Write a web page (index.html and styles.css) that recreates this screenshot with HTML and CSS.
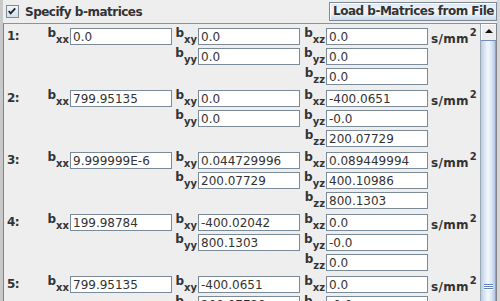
FILE: index.html
```html
<!DOCTYPE html>
<html>
<head>
	<meta charset="UTF-8">
	<title>b-matrices</title>
	<link rel="stylesheet" href="styles.css">
</head>
<body>
	<div class="panel">
		<div class="topbar">
			<label class="chk">
				<span class="box">
					<svg width="13" height="13" viewBox="0 0 13 13">
						<path d="M3 6 L5 8.5 L10 3" fill="none" stroke="#222" stroke-width="2"/>
					</svg>
				</span>
				Specify b-matrices
			</label>
			<button class="load">Load b-Matrices from File</button>
		</div>
		<div class="scrollpane">
			<div class="viewport">
				<!-- 1 -->
				<div class="entry">
					<div class="idx">1:</div>
					<div class="pair xx"><span class="lbl"><b>b</b><sub>xx</sub></span><input value="0.0"></div>
					<div class="pair xy"><span class="lbl"><b>b</b><sub>xy</sub></span><input value="0.0"></div>
					<div class="pair xz"><span class="lbl"><b>b</b><sub>xz</sub></span><input value="0.0"></div>
					<div class="unit">s/mm<sup>2</sup></div>
					<div class="pair yy"><span class="lbl"><b>b</b><sub>yy</sub></span><input value="0.0"></div>
					<div class="pair yz"><span class="lbl"><b>b</b><sub>yz</sub></span><input value="0.0"></div>
					<div class="pair zz"><span class="lbl"><b>b</b><sub>zz</sub></span><input value="0.0"></div>
				</div>
				<!-- 2 -->
				<div class="entry">
					<div class="idx">2:</div>
					<div class="pair xx"><span class="lbl"><b>b</b><sub>xx</sub></span><input value="799.95135"></div>
					<div class="pair xy"><span class="lbl"><b>b</b><sub>xy</sub></span><input value="0.0"></div>
					<div class="pair xz"><span class="lbl"><b>b</b><sub>xz</sub></span><input value="-400.0651"></div>
					<div class="unit">s/mm<sup>2</sup></div>
					<div class="pair yy"><span class="lbl"><b>b</b><sub>yy</sub></span><input value="0.0"></div>
					<div class="pair yz"><span class="lbl"><b>b</b><sub>yz</sub></span><input value="-0.0"></div>
					<div class="pair zz"><span class="lbl"><b>b</b><sub>zz</sub></span><input value="200.07729"></div>
				</div>
				<!-- 3 -->
				<div class="entry">
					<div class="idx">3:</div>
					<div class="pair xx"><span class="lbl"><b>b</b><sub>xx</sub></span><input value="9.999999E-6"></div>
					<div class="pair xy"><span class="lbl"><b>b</b><sub>xy</sub></span><input value="0.044729996"></div>
					<div class="pair xz"><span class="lbl"><b>b</b><sub>xz</sub></span><input value="0.089449994"></div>
					<div class="unit">s/mm<sup>2</sup></div>
					<div class="pair yy"><span class="lbl"><b>b</b><sub>yy</sub></span><input value="200.07729"></div>
					<div class="pair yz"><span class="lbl"><b>b</b><sub>yz</sub></span><input value="400.10986"></div>
					<div class="pair zz"><span class="lbl"><b>b</b><sub>zz</sub></span><input value="800.1303"></div>
				</div>
				<!-- 4 -->
				<div class="entry">
					<div class="idx">4:</div>
					<div class="pair xx"><span class="lbl"><b>b</b><sub>xx</sub></span><input value="199.98784"></div>
					<div class="pair xy"><span class="lbl"><b>b</b><sub>xy</sub></span><input value="-400.02042"></div>
					<div class="pair xz"><span class="lbl"><b>b</b><sub>xz</sub></span><input value="0.0"></div>
					<div class="unit">s/mm<sup>2</sup></div>
					<div class="pair yy"><span class="lbl"><b>b</b><sub>yy</sub></span><input value="800.1303"></div>
					<div class="pair yz"><span class="lbl"><b>b</b><sub>yz</sub></span><input value="-0.0"></div>
					<div class="pair zz"><span class="lbl"><b>b</b><sub>zz</sub></span><input value="0.0"></div>
				</div>
				<!-- 5 -->
				<div class="entry">
					<div class="idx">5:</div>
					<div class="pair xx"><span class="lbl"><b>b</b><sub>xx</sub></span><input value="799.95135"></div>
					<div class="pair xy"><span class="lbl"><b>b</b><sub>xy</sub></span><input value="-400.0651"></div>
					<div class="pair xz"><span class="lbl"><b>b</b><sub>xz</sub></span><input value="0.0"></div>
					<div class="unit">s/mm<sup>2</sup></div>
					<div class="pair yy"><span class="lbl"><b>b</b><sub>yy</sub></span><input value="200.07729"></div>
					<div class="pair yz"><span class="lbl"><b>b</b><sub>yz</sub></span><input value="-0.0"></div>
					<div class="pair zz"><span class="lbl"><b>b</b><sub>zz</sub></span><input value="800.1303"></div>
				</div>
			</div>
			<div class="vscroll">
				<div class="arrow"></div>
				<div class="thumb"><span class="grip"></span></div>
			</div>
		</div>
	</div>
</body>
</html>
```

FILE: styles.css
```css
* {
	margin: 0;
	padding: 0;
	box-sizing: border-box;
}

html,
body {
	width: 500px;
	height: 301px;
	overflow: hidden;
	background: #eeeeee;
	font-family: "DejaVu Sans", sans-serif;
	color: #333;
}

.panel {
	height: 301px;
	display: flex;
	flex-direction: column;
	border-left: 3px solid #c9c9c9;
	border-right: 3px solid #d6d6d6;
}

/* top bar */
.topbar {
	height: 23px;
	flex: none;
	display: flex;
	align-items: center;
	padding-left: 3px;
}

.chk {
	display: flex;
	align-items: center;
	font-size: 12px;
	font-weight: bold;
	letter-spacing: -0.5px;
	color: #333;
}

.chk .box {
	width: 13px;
	height: 13px;
	margin-right: 6px;
	border: 1px solid #7a8a99;
	background: linear-gradient(#f2f6fb, #d4e0ee);
	display: flex;
}

.chk .box svg {
	margin: -1px 0 0 -1px;
}

.load {
	margin-left: auto;
	width: 168px;
	height: 19px;
	border: 1px solid #7a8a99;
	border-radius: 0;
	background: linear-gradient(#dce7f3 0%, #f4f8fc 45%, #e6eef7 70%, #c9d9ec 100%);
	box-shadow: inset 1px 1px 0 #fff;
	font-family: "DejaVu Sans", sans-serif;
	font-size: 12px;
	font-weight: bold;
	letter-spacing: -0.5px;
	color: #333;
	white-space: nowrap;
	overflow: hidden;
	padding: 0 0 1px 1px;
}

/* scroll pane */
.scrollpane {
	flex: 1;
	display: flex;
	border-top: 1px solid #8e9296;
	border-left: 1px solid #7f8388;
	border-right: 1px solid #7f8388;
	min-height: 0;
}

.viewport {
	flex: 1;
	padding-top: 4px;
	overflow: hidden;
}

.entry {
	display: grid;
	grid-template-columns: 44px 124px 128px 128px auto;
	grid-template-rows: 17px 17px 17px;
	row-gap: 3px;
	margin-bottom: 5px;
}

.idx {
	grid-area: 1 / 1;
	padding-left: 3px;
	font-size: 12px;
	font-weight: bold;
	letter-spacing: -0.5px;
	line-height: 17px;
}

.xx { grid-area: 1 / 2; }
.xy { grid-area: 1 / 3; }
.xz { grid-area: 1 / 4; }
.unit { grid-area: 1 / 5; }
.yy { grid-area: 2 / 3; }
.yz { grid-area: 2 / 4; }
.zz { grid-area: 3 / 4; }

.pair {
	display: flex;
	justify-content: flex-end;
}

.lbl {
	display: flex;
	align-items: flex-end;
	height: 17px;
	padding-right: 1px;
	font-weight: bold;
}

.lbl b {
	font-size: 12px;
	line-height: 1;
	margin-bottom: 6px;
}

.lbl sub {
	font-size: 10px;
	line-height: 1;
	vertical-align: baseline;
}

.pair input {
	width: 102px;
	height: 17px;
	border: 1px solid #7a8a99;
	background: #fff;
	padding: 0 2px;
	font-family: "DejaVu Sans", sans-serif;
	font-size: 12px;
	color: #333;
	outline: none;
}

.unit {
	display: flex;
	align-items: flex-end;
	height: 17px;
	padding-left: 3px;
	font-size: 12px;
	font-weight: bold;
	letter-spacing: 0.3px;
	line-height: 1;
}

.unit sup {
	font-size: 10px;
	line-height: 1;
	vertical-align: baseline;
	margin: 0 0 7px 1px;
}

/* vertical scrollbar */
.vscroll {
	width: 16px;
	flex: none;
	display: flex;
	flex-direction: column;
	border-left: 1px solid #9aa8b6;
}

.arrow {
	height: 17px;
	flex: none;
	background: #eeeeee;
	border-bottom: 1px solid #6f8fbf;
	box-shadow: inset 1px 1px 0 #fff;
	display: flex;
	justify-content: center;
	align-items: center;
}

.arrow::before {
	content: "";
	border-left: 4px solid transparent;
	border-right: 4px solid transparent;
	border-bottom: 4px solid #111;
	margin-top: -2px;
}

.thumb {
	flex: 1;
	background: linear-gradient(to right, #b9cde6 0%, #d9e5f3 25%, #f4f8fc 50%, #dce7f4 75%, #b3c8e4 100%);
	border-right: 1px solid #8ca5c9;
	display: flex;
	flex-direction: column;
	justify-content: flex-end;
	align-items: center;
	padding-bottom: 11px;
}

.grip {
	width: 9px;
	height: 6px;
	background: repeating-linear-gradient(#6382bf 0, #6382bf 1px, #fff 1px, #fff 2px);
}
```
